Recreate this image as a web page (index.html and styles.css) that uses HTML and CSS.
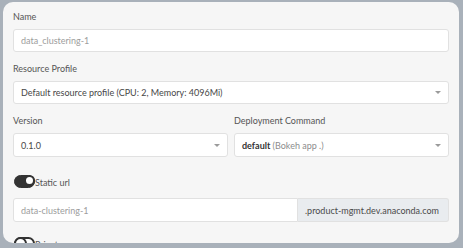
FILE: index.html
```html
<!DOCTYPE html>
<html lang="en">
    <head>
        <meta charset="UTF-8">
        <title>Deploy project</title>
        <link rel="stylesheet" href="styles.css">
    </head>

    <body class="page">
        <form class="deploy">
            <div class="deploy__group">
                <label class="deploy__label">Name</label>
                <div class="deploy__input deploy__input--placeholder">data_clustering-1</div>
            </div>

            <div class="deploy__group">
                <label class="deploy__label">Resource Profile</label>
                <div class="deploy__input deploy__input--select">
                    <span>Default resource profile (CPU: 2, Memory: 4096Mi)</span>
                    <span class="deploy__caret"></span>
                </div>
            </div>

            <div class="deploy__row">
                <div class="deploy__group">
                    <label class="deploy__label">Version</label>
                    <div class="deploy__input deploy__input--select">
                        <span>0.1.0</span>
                        <span class="deploy__caret"></span>
                    </div>
                </div>
                <div class="deploy__group">
                    <label class="deploy__label">Deployment Command</label>
                    <div class="deploy__input deploy__input--select">
                        <span><b class="deploy__strong">default</b> <span class="deploy__muted">(Bokeh app .)</span></span>
                        <span class="deploy__caret"></span>
                    </div>
                </div>
            </div>

            <div class="deploy__switch">
                <span class="deploy__toggle deploy__toggle--on"></span>
                <span class="deploy__switch__label">Static url</span>
            </div>

            <div class="deploy__addon-group">
                <div class="deploy__input deploy__input--placeholder deploy__input--joined">data-clustering-1</div>
                <div class="deploy__addon">.product-mgmt.dev.anaconda.com</div>
            </div>

            <div class="deploy__switch deploy__switch--last">
                <span class="deploy__toggle"></span>
                <span class="deploy__switch__label">Private</span>
            </div>
        </form>
    </body>
</html>
```

FILE: styles.css
```css
html,
body {
    border: none;
    margin: 0;
    padding: 0;
}

:root {
    --color-frame: #a9b1ba;
    --color-panel: #f6f6f6;
    --color-border: #e1e1e1;
    --color-text: #474747;
    --color-label: #555555;
    --color-muted: #9d9d9d;
    --color-addon: #e9ecef;
}

.page {
    background-color: var(--color-frame);
    box-sizing: border-box;
    font-family: Lato, "Open Sans", sans-serif;
    font-size: 9px;
    height: 248px;
    overflow: hidden;
    padding: 2px 4px 0 3px;
}

.deploy {
    background-color: var(--color-panel);
    border-radius: 10px;
    box-sizing: border-box;
    height: 241px;
    overflow: hidden;
    padding: 8px 10px 0 10px;
}

.deploy__group {
    margin-bottom: 10px;
}

.deploy__row .deploy__group {
    margin-bottom: 0;
}

.deploy__label {
    color: var(--color-label);
    display: block;
    height: 14px;
    line-height: 14px;
    margin-bottom: 5px;
}

.deploy__input {
    align-items: center;
    background-color: #ffffff;
    border: 1px solid var(--color-border);
    border-radius: 3px;
    box-sizing: border-box;
    color: var(--color-text);
    display: flex;
    height: 23px;
    padding: 0 7px;
    white-space: nowrap;
}

.deploy__input--placeholder {
    color: var(--color-muted);
}

.deploy__input--select {
    justify-content: space-between;
}

.deploy__caret {
    border-left: 3px solid transparent;
    border-right: 3px solid transparent;
    border-top: 3px solid #9b9b9b;
    height: 0;
    width: 0;
}

.deploy__strong {
    color: #333333;
    font-weight: 700;
}

.deploy__muted {
    color: #8c8c8c;
}

.deploy__row {
    display: grid;
    gap: 6px;
    grid-template-columns: 1fr 1fr;
}

.deploy__row .deploy__input {
    height: 24px;
}

.deploy__switch {
    align-items: flex-end;
    display: flex;
    margin: 18px 0 10px 1px;
}

.deploy__switch--last {
    margin-top: 15px;
}

.deploy__toggle {
    background-color: #ffffff;
    border: 2px solid #333333;
    border-radius: 7px;
    box-sizing: border-box;
    display: inline-block;
    height: 13px;
    position: relative;
    width: 21px;
}

.deploy__toggle::after {
    background-color: #ffffff;
    border: 2px solid #333333;
    border-radius: 50%;
    box-sizing: border-box;
    content: "";
    height: 13px;
    left: -2px;
    position: absolute;
    top: -2px;
    width: 13px;
}

.deploy__toggle--on {
    background-color: #333333;
    border-width: 1px;
}

.deploy__toggle--on::after {
    border-width: 2px;
    height: 11px;
    left: auto;
    right: -1px;
    top: -1px;
    width: 11px;
}

.deploy__switch__label {
    color: var(--color-label);
    line-height: 10px;
}

.deploy__addon-group {
    display: flex;
}

.deploy__input--joined {
    border-radius: 3px 0 0 3px;
    flex: 1;
    height: 24px;
}

.deploy__addon {
    align-items: center;
    background-color: var(--color-addon);
    border: 1px solid var(--color-border);
    border-left: none;
    border-radius: 0 3px 3px 0;
    box-sizing: border-box;
    color: #4a4a4a;
    display: flex;
    height: 24px;
    padding: 0 7px;
    white-space: nowrap;
    width: 151px;
}
```
